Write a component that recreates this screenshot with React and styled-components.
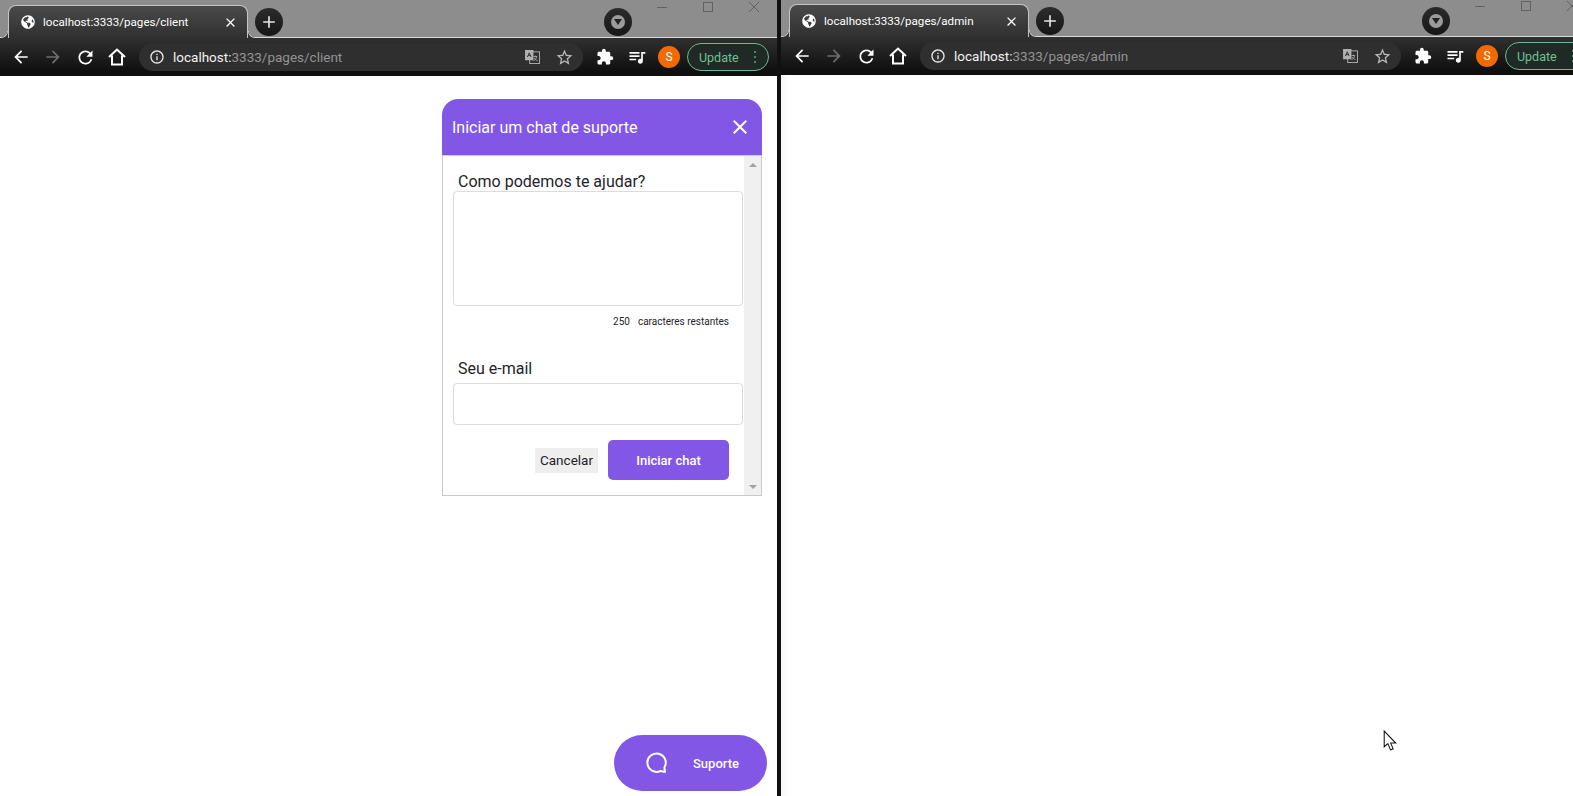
import React from "react";
import styled, { createGlobalStyle } from "styled-components";
import { FaGlobeAmericas } from "react-icons/fa";
import {
  MdArrowBack,
  MdArrowForward,
  MdRefresh,
  MdInfoOutline,
  MdStarBorder,
  MdExtension,
  MdQueueMusic,
  MdClose,
  MdAdd,
} from "react-icons/md";

const GlobalStyle = createGlobalStyle`
  html, body {
    margin: 0;
    height: 100%;
    overflow: hidden;
    background: #fff;
    font-family: Roboto, "Liberation Sans", sans-serif;
  }
  #root { height: 100%; }
`;

const Desktop = styled.div`
  display: flex;
  width: 1573px;
  height: 796px;
  overflow: hidden;
  background: #111;
`;

const Window = styled.div`
  display: flex;
  flex-direction: column;
  flex: 0 0 ${(p) => p.$width}px;
  height: 797px;
  margin-top: ${(p) => (p.$raised ? -1 : 0)}px;
  margin-right: ${(p) => (p.$raised ? 0 : 4)}px;
`;

const TitleBar = styled.div`
  display: flex;
  align-items: flex-end;
  box-sizing: border-box;
  height: 38px;
  padding-left: 8px;
  background: #8d8d8d;
  border-bottom: 1px solid #d8d8d8;
`;

const Tab = styled.div`
  position: relative;
  display: flex;
  align-items: center;
  box-sizing: border-box;
  width: 240px;
  height: 33px;
  margin-bottom: -1px;
  padding: 0 9px 0 12px;
  border: 1px solid #c4c4c4;
  border-bottom: 0;
  border-radius: 8px 8px 0 0;
  background: linear-gradient(#4a4a4a, #303030);
  color: #fff;
  font-size: 11.6px;

  &::before,
  &::after {
    content: "";
    position: absolute;
    bottom: 0;
    width: 7px;
    height: 7px;
  }
  &::before {
    left: -8px;
    background: radial-gradient(circle at 0 0, transparent 6px, #c4c4c4 6.5px, #303030 7.5px);
  }
  &::after {
    right: -8px;
    background: radial-gradient(circle at 100% 0, transparent 6px, #c4c4c4 6.5px, #303030 7.5px);
  }
`;

const TabTitle = styled.span`
  flex: 1;
  margin-left: 8px;
  white-space: nowrap;
`;

const NewTab = styled.div`
  display: flex;
  align-items: center;
  justify-content: center;
  width: 28px;
  height: 28px;
  margin: 0 0 1px 7px;
  border-radius: 50%;
  background: linear-gradient(#2c2c2c, #161616);
  color: #e4e4e4;
`;

const Spacer = styled.div`
  flex: 1;
`;

const TabSearch = styled(NewTab)`
  margin: 0 0 1px 0;
`;

const TabSearchInner = styled.div`
  display: flex;
  align-items: center;
  justify-content: center;
  width: 14px;
  height: 14px;
  border-radius: 50%;
  background: #9b9b9b;
`;

const WindowControls = styled.div`
  display: flex;
  align-self: flex-start;
  gap: 36px;
  margin: 2px 18px 0 25px;
  color: #616161;
`;

const Toolbar = styled.div`
  display: flex;
  align-items: center;
  box-sizing: border-box;
  height: 38px;
  padding: 0 8px 0 0;
  background: linear-gradient(#303030, #0f0f0f 88%);
`;

const NavButton = styled.div`
  display: flex;
  align-items: center;
  justify-content: center;
  flex: 0 0 32px;
  color: ${(p) => (p.$dim ? "#6e6e6e" : "#fff")};
`;

const NavGroup = styled.div`
  display: flex;
  padding-left: 5px;
`;

const Omnibox = styled.div`
  display: flex;
  flex: 1;
  align-items: center;
  height: 28px;
  margin: 0 6px;
  padding: 0 3px 0 10px;
  border-radius: 14px;
  background: #2f2f2f;
  color: #e8e8e8;
`;

const Address = styled.div`
  flex: 1;
  margin-left: 8px;
  font-size: 13.5px;
  color: #939393;
  white-space: nowrap;

  b {
    font-weight: 400;
    color: #f2f2f2;
  }
`;

const OmniIcon = styled.div`
  display: flex;
  align-items: center;
  justify-content: center;
  flex: 0 0 32px;
  color: #b9b9b9;
`;

const ExtIcon = styled.div`
  display: flex;
  align-items: center;
  justify-content: center;
  flex: 0 0 32px;
  color: #fff;
`;

const Avatar = styled.div`
  display: flex;
  align-items: center;
  justify-content: center;
  width: 22px;
  height: 22px;
  margin: 0 7px 0 5px;
  border-radius: 50%;
  background: #f06a00;
  color: #fff;
  font-size: 12px;
`;

const UpdatePill = styled.div`
  display: flex;
  align-items: center;
  justify-content: space-between;
  box-sizing: border-box;
  width: 82px;
  height: 28px;
  padding: 0 12px 0 11px;
  border: 1px solid #6fb98a;
  border-radius: 14px;
  background: #1f2a26;
  color: #73c08f;
  font-size: 12.5px;
`;

const Dots = styled.div`
  display: flex;
  flex-direction: column;
  gap: 3px;

  i {
    width: 2px;
    height: 2px;
    background: #5fa57a;
    border-radius: 50%;
  }
`;

const ClientPage = styled.main`
  flex: 1;
  display: flex;
  flex-direction: column;
  align-items: flex-end;
  padding: 23px 10px 6px 0;
  background: #fff;
`;

const AdminPage = styled.main`
  position: relative;
  flex: 1;
  background: linear-gradient(90deg, #f6f6f6, #fff 8px);
`;

const Chat = styled.section`
  width: 320px;
  margin-right: 5px;
`;

const ChatHeader = styled.header`
  display: flex;
  align-items: center;
  justify-content: space-between;
  height: 56px;
  padding: 0 10px 0 10px;
  border-radius: 16px 16px 0 0;
  background: #8257e5;
  color: #fff;
  font-size: 16px;
`;

const ChatBody = styled.div`
  display: flex;
  height: 341px;
  border: 1px solid #c8c8c8;
  border-top-color: #d0d0d0;
  box-sizing: border-box;
`;

const ChatForm = styled.form`
  flex: 1;
  padding: 16px 1px 0 10px;
`;

const FieldLabel = styled.label`
  display: block;
  padding-left: 5px;
  font-size: 16px;
  line-height: 19px;
  color: #1f2328;
`;

const TextArea = styled.textarea`
  display: block;
  box-sizing: border-box;
  width: 100%;
  height: 115px;
  border: 1px solid #dcdcdc;
  border-radius: 4px;
  resize: none;
  outline: none;
`;

const TextInput = styled.input`
  display: block;
  box-sizing: border-box;
  width: 100%;
  height: 42px;
  margin-top: 5px;
  border: 1px solid #dcdcdc;
  border-radius: 4px;
  outline: none;
`;

const Counter = styled.div`
  display: flex;
  justify-content: flex-end;
  gap: 8px;
  height: 29px;
  margin-bottom: 24px;
  padding: 10px 14px 0 0;
  box-sizing: border-box;
  font-size: 10px;
  line-height: 12px;
  color: #1f2328;
`;

const Actions = styled.div`
  display: flex;
  align-items: center;
  justify-content: flex-end;
  gap: 10px;
  margin-top: 15px;
  padding-right: 14px;
`;

const CancelButton = styled.button`
  width: 63px;
  height: 25px;
  padding: 0;
  border: 0;
  background: #eee;
  color: #1f2328;
  font: 400 13.5px Roboto, sans-serif;
`;

const StartButton = styled.button`
  width: 121px;
  height: 40px;
  padding: 0;
  border: 0;
  border-radius: 5px;
  background: #8257e5;
  color: #fff;
  font: 500 13px Roboto, sans-serif;
`;

const FakeScroll = styled.div`
  display: flex;
  flex-direction: column;
  justify-content: space-between;
  align-items: center;
  flex: 0 0 17px;
  padding: 7px 0 6px;
  background: #f0f0f0;
`;

const Arrow = styled.div`
  width: 0;
  height: 0;
  border-left: 4px solid transparent;
  border-right: 4px solid transparent;
  ${(p) => (p.$down ? "border-top" : "border-bottom")}: 4px solid #a3a3a3;
`;

const SupportButton = styled.button`
  display: flex;
  align-items: center;
  justify-content: space-between;
  box-sizing: border-box;
  width: 153px;
  height: 56px;
  margin-top: auto;
  padding: 0 28px 0 31px;
  border: 0;
  border-radius: 28px;
  background: #8257e5;
  color: #fff;
  font: 500 13px Roboto, sans-serif;
`;

const Cursor = styled.svg`
  position: absolute;
  left: 602px;
  top: 655px;
`;

const HomeIcon = () => (
  <svg width="20" height="20" viewBox="0 0 20 20" fill="none" stroke="currentColor" strokeWidth="2">
    <path d="M2 10 L10 2.5 L18 10 M5 8.5 V17.5 H15 V8.5" strokeLinejoin="miter" />
  </svg>
);

const TranslateIcon = () => (
  <svg width="15" height="14" viewBox="0 0 16 15">
    <rect x="5" y="2" width="10.5" height="12.5" fill="#2f2f2f" stroke="#b0b0b0" />
    <rect x="0" y="0" width="9" height="11" fill="#b0b0b0" />
    <path d="M2.5 7.5 L4.5 3 L6.5 7.5 M3.3 6 H5.7" stroke="#2f2f2f" fill="none" />
    <path d="M9 7 H13 M11 6 V7 M12.5 7 C12 9.5 10.5 11 9 11.5 M10 8.5 C10.5 10 12 11 13.5 11.5" stroke="#b0b0b0" fill="none" strokeWidth="0.9" />
  </svg>
);

const BubbleIcon = () => (
  <svg width="22" height="22" viewBox="0 0 22 22" fill="none" stroke="#fff" strokeWidth="2">
    <path d="M20 20 L15.5 19 A9.2 9.2 0 1 1 19.4 15.5 Z" strokeLinejoin="round" />
  </svg>
);

const Browser = ({ path, width, raised, children }) => (
  <Window $width={width} $raised={raised}>
    <TitleBar>
      <Tab>
        <FaGlobeAmericas size={14} />
        <TabTitle>localhost:3333/pages/{path}</TabTitle>
        <MdClose size={15} />
      </Tab>
      <NewTab>
        <MdAdd size={20} />
      </NewTab>
      <Spacer />
      <TabSearch>
        <TabSearchInner>
          <svg width="8" height="6" viewBox="0 0 8 6">
            <path d="M0 0 H8 L4 6 Z" fill="#222" />
          </svg>
        </TabSearchInner>
      </TabSearch>
      <WindowControls>
        <svg width="10" height="10" viewBox="0 0 10 10" stroke="currentColor">
          <path d="M0 5.5 H10" />
        </svg>
        <svg width="10" height="10" viewBox="0 0 10 10" fill="none" stroke="currentColor">
          <rect x="0.5" y="0.5" width="9" height="9" />
        </svg>
        <svg width="10" height="10" viewBox="0 0 10 10" stroke="currentColor">
          <path d="M0 0 L10 10 M10 0 L0 10" />
        </svg>
      </WindowControls>
    </TitleBar>
    <Toolbar>
      <NavGroup>
        <NavButton>
          <MdArrowBack size={20} />
        </NavButton>
        <NavButton $dim>
          <MdArrowForward size={20} />
        </NavButton>
        <NavButton>
          <MdRefresh size={21} />
        </NavButton>
        <NavButton>
          <HomeIcon />
        </NavButton>
      </NavGroup>
      <Omnibox>
        <MdInfoOutline size={16} />
        <Address>
          <b>localhost:</b>3333/pages/{path}
        </Address>
        <OmniIcon>
          <TranslateIcon />
        </OmniIcon>
        <OmniIcon>
          <MdStarBorder size={19} />
        </OmniIcon>
      </Omnibox>
      <ExtIcon>
        <MdExtension size={18} />
      </ExtIcon>
      <ExtIcon>
        <MdQueueMusic size={20} />
      </ExtIcon>
      <Avatar>S</Avatar>
      <UpdatePill>
        Update
        <Dots>
          <i />
          <i />
          <i />
        </Dots>
      </UpdatePill>
    </Toolbar>
    {children}
  </Window>
);

export default function App() {
  return (
    <>
      <GlobalStyle />
      <Desktop>
        <Browser path="client" width={777}>
          <ClientPage>
            <Chat>
              <ChatHeader>
                Iniciar um chat de suporte
                <MdClose size={24} />
              </ChatHeader>
              <ChatBody>
                <ChatForm>
                  <FieldLabel>Como podemos te ajudar?</FieldLabel>
                  <TextArea />
                  <Counter>
                    <span>250</span>
                    <span>caracteres restantes</span>
                  </Counter>
                  <FieldLabel>Seu e-mail</FieldLabel>
                  <TextInput />
                  <Actions>
                    <CancelButton type="button">Cancelar</CancelButton>
                    <StartButton type="button">Iniciar chat</StartButton>
                  </Actions>
                </ChatForm>
                <FakeScroll>
                  <Arrow />
                  <Arrow $down />
                </FakeScroll>
              </ChatBody>
            </Chat>
            <SupportButton>
              <BubbleIcon />
              Suporte
            </SupportButton>
          </ClientPage>
        </Browser>
        <Browser path="admin" width={814} raised>
          <AdminPage>
            <Cursor width="15" height="22" viewBox="0 0 14 21">
              <path d="M1 1 V16 L4.5 13 L7 19 L9.5 18 L7.2 12.5 H12 Z" fill="#fff" stroke="#111" strokeWidth="1" />
            </Cursor>
          </AdminPage>
        </Browser>
      </Desktop>
    </>
  );
}
